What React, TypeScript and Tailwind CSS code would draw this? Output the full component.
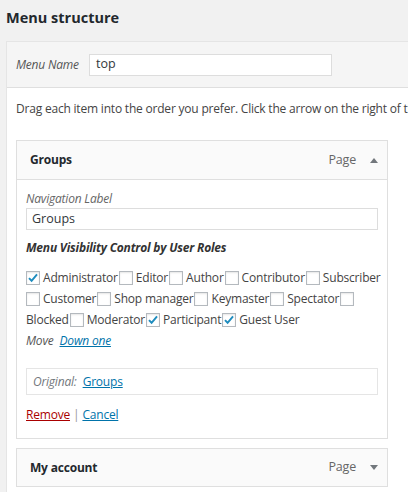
import React from "react";

const Check = ({ checked }: { checked?: boolean }) => (
  <span className="relative inline-flex w-[14px] h-[14px] shrink-0 border border-[#b4b9be] bg-white shadow-[inset_0_1px_2px_rgba(0,0,0,0.1)] mr-[3px]">
    {checked && (
      <svg viewBox="0 0 16 16" className="absolute left-[-1px] top-[-1px] w-[14px] h-[14px]">
        <path d="M3.4 8.2 L6.4 11.2 L12.6 3.8" fill="none" stroke="#1e8cbe" strokeWidth="2.2" strokeLinecap="butt" strokeLinejoin="miter" />
      </svg>
    )}
  </span>
);

const Label = ({ children }: { children: React.ReactNode }) => (
  <span className="mr-[1px] whitespace-nowrap">{children}</span>
);

const Tri = ({ up }: { up?: boolean }) => (
  <svg viewBox="0 0 8 5" className="w-[8px] h-[5px]">
    {up ? <path d="M0 5 L4 0 L8 5 Z" fill="#72777c" /> : <path d="M0 0 L4 5 L8 0 Z" fill="#72777c" />}
  </svg>
);

export default function App() {
  return (
    <div
      className="w-[408px] h-[492px] overflow-hidden bg-[#f1f1f1] text-[12px] tracking-[-0.2px] text-[#444]"
      style={{ fontFamily: "'Open Sans', 'Noto Sans', sans-serif" }}
    >
      <div className="h-[41px] pl-[6px] pt-[8px]">
        <h2 className="text-[14.5px] tracking-normal leading-[20px] font-bold text-[#23282d]">Menu structure</h2>
      </div>
      <div className="ml-[6px] w-[500px] border-l border-t border-[#e5e5e5]">
        <div className="h-[46px] bg-[#f5f5f5] border-b border-[#dfdfdf] flex items-center pl-[9px]">
          <span className="italic text-[#555] w-[73px]">Menu Name</span>
          <div className="w-[243px] h-[22px] border border-[#ddd] bg-white flex items-center pl-[6px] text-[#32373c] text-[12.5px] tracking-normal">
            top
          </div>
        </div>
        <div className="bg-white pl-[9px] pt-[11px] h-[500px]">
          <p className="leading-[20px] whitespace-nowrap w-[392px] overflow-hidden">
            Drag each item into the order you prefer. Click the arrow on the right of the item to reveal additional configuration options.
          </p>
          <div className="mt-[21px] w-[372px]">
            <div className="h-[40px] border border-[#dfdfdf] bg-[#fafafa] flex items-center pl-[13px] pr-[9px]">
              <span className="font-bold text-[#23282d] flex-1">Groups</span>
              <span className="text-[#666] text-[12.5px] mr-[14px]">Page</span>
              <Tri up />
            </div>
            <div className="border border-t-0 border-[#dfdfdf] bg-white px-[9px] pt-[10px] pb-[13px]">
              <div className="italic text-[#666] leading-[18px]">Navigation Label</div>
              <div className="h-[22px] border border-[#ddd] flex items-center pl-[5px] text-[#32373c] text-[12.5px] tracking-normal">Groups</div>
              <div className="mt-[9px] font-bold italic leading-[18px] text-[#333]">Menu Visibility Control by User Roles</div>
              <div className="mt-[10px]">
                <div className="flex items-center h-[21px]">
                  <Check checked /><Label>Administrator</Label>
                  <Check /><Label>Editor</Label>
                  <Check /><Label>Author</Label>
                  <Check /><Label>Contributor</Label>
                  <Check /><Label>Subscriber</Label>
                </div>
                <div className="flex items-center h-[21px]">
                  <Check /><Label>Customer</Label>
                  <Check /><Label>Shop manager</Label>
                  <Check /><Label>Keymaster</Label>
                  <Check /><Label>Spectator</Label>
                  <Check />
                </div>
                <div className="flex items-center h-[21px]">
                  <Label>Blocked</Label>
                  <Check /><Label>Moderator</Label>
                  <Check checked /><Label>Participant</Label>
                  <Check checked /><Label>Guest User</Label>
                </div>
                <div className="flex items-center h-[21px]">
                  <span className="italic text-[#555] mr-[6px]">Move</span>
                  <a className="italic text-[#0073aa] underline">Down one</a>
                </div>
              </div>
              <div className="mt-[17px] h-[27px] border border-[#e5e5e5] flex items-center pl-[6px]">
                <span className="italic text-[#72777c] mr-[6px]">Original:</span>
                <a className="text-[#0073aa] underline">Groups</a>
              </div>
              <div className="mt-[10px] leading-[20px]">
                <a className="text-[#a00] underline">Remove</a>
                <span className="text-[#999] mx-[3px]">|</span>
                <a className="text-[#0073aa] underline">Cancel</a>
              </div>
            </div>
            <div className="mt-[9px] h-[39px] border border-[#dfdfdf] bg-[#fafafa] flex items-center pl-[13px] pr-[9px]">
              <span className="font-bold text-[#23282d] flex-1">My account</span>
              <span className="text-[#666] text-[12.5px] mr-[14px]">Page</span>
              <Tri />
            </div>
          </div>
        </div>
      </div>
    </div>
  );
}
